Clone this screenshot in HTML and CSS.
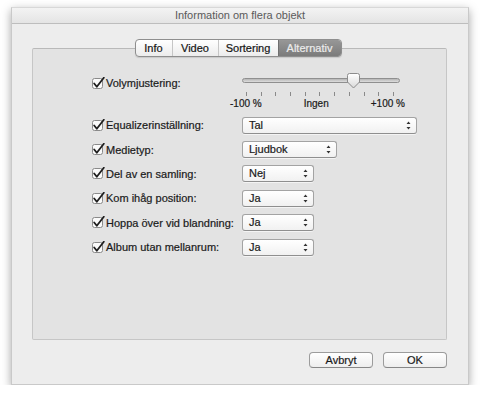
FILE: index.html
```html
<!DOCTYPE html>
<html lang="sv">
<head>
    <meta charset="UTF-8">
    <title>Information om flera objekt</title>
    <link rel="stylesheet" href="styles.css">
</head>
<body>
    <div class="window">
        <div class="titlebar">Information om flera objekt</div>
        <div class="window-body">
            <div class="tabs">
                <span class="tab info">Info</span>
                <span class="tab video">Video</span>
                <span class="tab sort">Sortering</span>
                <span class="tab selected">Alternativ</span>
            </div>
            <div class="panel">
                <div class="row volume-row">
                    <label class="check"><svg width="13" height="13" viewBox="0 0 13 13"><rect x="0.5" y="1.5" width="10" height="10" rx="2" fill="#fafafa" stroke="#8a8a8a"/><path d="M2.2 6.5 L4.8 9.8 L11.8 0.8" fill="none" stroke="#1d1d1d" stroke-width="1.8" stroke-linejoin="round" stroke-linecap="round"/></svg>Volymjustering:</label>
                    <div class="slider">
                        <div class="track"></div>
                        <div class="knob"><svg width="15" height="16" viewBox="0 0 15 16"><defs><linearGradient id="kg" x1="0" y1="0" x2="0" y2="1"><stop offset="0" stop-color="#ffffff"/><stop offset="1" stop-color="#d9d9d9"/></linearGradient></defs><path d="M1.5 2.5 Q1.5 0.5 3.5 0.5 L11.5 0.5 Q13.5 0.5 13.5 2.5 L13.5 9 L7.5 15 L1.5 9 Z" fill="url(#kg)" stroke="#8c8c8c"/></svg></div>
                        <div class="ticks">
                            <i></i><i></i><i></i><i></i><i></i><i></i><i></i><i></i><i></i><i></i><i></i>
                        </div>
                        <div class="tick-labels">
                            <span>-100 %</span>
                            <span>Ingen</span>
                            <span>+100 %</span>
                        </div>
                    </div>
                </div>
                <div class="row">
                    <label class="check"><svg width="13" height="13" viewBox="0 0 13 13"><rect x="0.5" y="1.5" width="10" height="10" rx="2" fill="#fafafa" stroke="#8a8a8a"/><path d="M2.2 6.5 L4.8 9.8 L11.8 0.8" fill="none" stroke="#1d1d1d" stroke-width="1.8" stroke-linejoin="round" stroke-linecap="round"/></svg>Equalizerinställning:</label>
                    <div class="popup wide">Tal<svg class="arrows" width="5" height="9" viewBox="0 0 5 9"><path d="M2.5 0.5 L4.5 3 L0.5 3 Z M2.5 8.5 L4.5 6 L0.5 6 Z" fill="#333"/></svg></div>
                </div>
                <div class="row">
                    <label class="check"><svg width="13" height="13" viewBox="0 0 13 13"><rect x="0.5" y="1.5" width="10" height="10" rx="2" fill="#fafafa" stroke="#8a8a8a"/><path d="M2.2 6.5 L4.8 9.8 L11.8 0.8" fill="none" stroke="#1d1d1d" stroke-width="1.8" stroke-linejoin="round" stroke-linecap="round"/></svg>Medietyp:</label>
                    <div class="popup medium">Ljudbok<svg class="arrows" width="5" height="9" viewBox="0 0 5 9"><path d="M2.5 0.5 L4.5 3 L0.5 3 Z M2.5 8.5 L4.5 6 L0.5 6 Z" fill="#333"/></svg></div>
                </div>
                <div class="row">
                    <label class="check"><svg width="13" height="13" viewBox="0 0 13 13"><rect x="0.5" y="1.5" width="10" height="10" rx="2" fill="#fafafa" stroke="#8a8a8a"/><path d="M2.2 6.5 L4.8 9.8 L11.8 0.8" fill="none" stroke="#1d1d1d" stroke-width="1.8" stroke-linejoin="round" stroke-linecap="round"/></svg>Del av en samling:</label>
                    <div class="popup">Nej<svg class="arrows" width="5" height="9" viewBox="0 0 5 9"><path d="M2.5 0.5 L4.5 3 L0.5 3 Z M2.5 8.5 L4.5 6 L0.5 6 Z" fill="#333"/></svg></div>
                </div>
                <div class="row">
                    <label class="check"><svg width="13" height="13" viewBox="0 0 13 13"><rect x="0.5" y="1.5" width="10" height="10" rx="2" fill="#fafafa" stroke="#8a8a8a"/><path d="M2.2 6.5 L4.8 9.8 L11.8 0.8" fill="none" stroke="#1d1d1d" stroke-width="1.8" stroke-linejoin="round" stroke-linecap="round"/></svg>Kom ihåg position:</label>
                    <div class="popup">Ja<svg class="arrows" width="5" height="9" viewBox="0 0 5 9"><path d="M2.5 0.5 L4.5 3 L0.5 3 Z M2.5 8.5 L4.5 6 L0.5 6 Z" fill="#333"/></svg></div>
                </div>
                <div class="row">
                    <label class="check"><svg width="13" height="13" viewBox="0 0 13 13"><rect x="0.5" y="1.5" width="10" height="10" rx="2" fill="#fafafa" stroke="#8a8a8a"/><path d="M2.2 6.5 L4.8 9.8 L11.8 0.8" fill="none" stroke="#1d1d1d" stroke-width="1.8" stroke-linejoin="round" stroke-linecap="round"/></svg>Hoppa över vid blandning:</label>
                    <div class="popup">Ja<svg class="arrows" width="5" height="9" viewBox="0 0 5 9"><path d="M2.5 0.5 L4.5 3 L0.5 3 Z M2.5 8.5 L4.5 6 L0.5 6 Z" fill="#333"/></svg></div>
                </div>
                <div class="row">
                    <label class="check"><svg width="13" height="13" viewBox="0 0 13 13"><rect x="0.5" y="1.5" width="10" height="10" rx="2" fill="#fafafa" stroke="#8a8a8a"/><path d="M2.2 6.5 L4.8 9.8 L11.8 0.8" fill="none" stroke="#1d1d1d" stroke-width="1.8" stroke-linejoin="round" stroke-linecap="round"/></svg>Album utan mellanrum:</label>
                    <div class="popup">Ja<svg class="arrows" width="5" height="9" viewBox="0 0 5 9"><path d="M2.5 0.5 L4.5 3 L0.5 3 Z M2.5 8.5 L4.5 6 L0.5 6 Z" fill="#333"/></svg></div>
                </div>
            </div>
            <div class="buttons">
                <button type="button">Avbryt</button>
                <button type="button">OK</button>
            </div>
        </div>
    </div>
</body>
</html>
```

FILE: styles.css
```css
* {
    margin: 0;
    padding: 0;
    box-sizing: border-box;
}

body {
    font-family: 'Liberation Sans', Arial, sans-serif;
    font-size: 11px;
    color: #1a1a1a;
    background: #fff;
    -webkit-text-stroke: 0.2px;
}

.window {
    width: 458px;
    height: 378px;
    margin: 7px 0 0 11px;
    background: #ededed;
    border: 1px solid #c9c9c9;
    border-top-color: #d8d8d8;
    box-shadow: 0 3px 9px rgba(0, 0, 0, 0.35);
    display: flex;
    flex-direction: column;
}

.titlebar {
    height: 16px;
    line-height: 15px;
    text-align: center;
    color: #5a5a5a;
    font-size: 11px;
    background: linear-gradient(#f3f3f3, #e4e4e4);
    border-bottom: 1px solid #bdbdbd;
    -webkit-text-stroke: 0;
}

.window-body {
    flex: 1;
    padding: 15px 21px 0 20px;
    display: flex;
    flex-direction: column;
}

.tabs {
    align-self: center;
    margin-left: -3px;
    display: flex;
    height: 18px;
    border: 1px solid #8e8e8e;
    border-radius: 4px;
    background: linear-gradient(#ffffff, #ececec);
    position: relative;
    z-index: 1;
    box-shadow: 0 1px 1px rgba(0, 0, 0, 0.12);
}

.tab {
    line-height: 17px;
    text-align: center;
    border-left: 1px solid #c6c6c6;
    color: #151515;
}

.tab.info {
    width: 36px;
    border-left: none;
}

.tab.video {
    width: 46px;
}

.tab.sort {
    width: 60px;
}

.tab.selected {
    width: 63px;
    background: linear-gradient(#979797, #7b7b7b);
    color: #ececec;
    border-left: 1px solid #6f6f6f;
    border-radius: 0 3px 3px 0;
}

.panel {
    margin-top: -9px;
    height: 292px;
    background: #e3e3e3;
    border: 1px solid #c6c6c6;
    border-top-color: #b9b9b9;
    border-radius: 2px;
    padding: 27px 0 0 59px;
}

.row {
    display: grid;
    grid-template-columns: 150px auto;
    align-items: center;
    height: 24.4px;
}

.volume-row {
    align-items: start;
    height: 37px;
}

.check {
    display: flex;
    align-items: center;
    line-height: 14px;
    white-space: nowrap;
}

.check svg {
    margin-right: 1px;
    flex: none;
}

.slider {
    position: relative;
    width: 158px;
}

.track {
    margin-top: 2px;
    height: 5px;
    border-radius: 3px;
    border: 1px solid #8f8f8f;
    background: linear-gradient(#b5b5b5, #dedede);
}

.knob {
    position: absolute;
    left: 104px;
    top: -3px;
    line-height: 0;
}

.ticks {
    display: flex;
    justify-content: space-between;
    padding: 0 6px 0 4px;
    margin-top: 9px;
}

.ticks i {
    width: 1px;
    height: 4px;
    background: #8a8a8a;
}

.tick-labels {
    display: flex;
    justify-content: space-between;
    margin: 1px -5px 0 -12px;
    line-height: 13px;
    font-size: 10px;
}

.popup {
    position: relative;
    width: 72px;
    height: 17px;
    line-height: 15px;
    padding-left: 6px;
    border: 1px solid #a3a3a3;
    border-bottom-color: #8f8f8f;
    border-radius: 3px;
    background: linear-gradient(#ffffff, #f1f1f1);
    box-shadow: 0 1px 0 rgba(255, 255, 255, 0.6);
}

.popup.wide {
    width: 175px;
}

.popup.medium {
    width: 95px;
}

.popup .arrows {
    position: absolute;
    right: 5px;
    top: 3px;
}

.buttons {
    display: flex;
    justify-content: flex-end;
    gap: 10px;
    margin-top: 12px;
}

.buttons button {
    width: 64px;
    height: 16px;
    font-family: 'Liberation Sans', Arial, sans-serif;
    font-size: 11px;
    color: #1a1a1a;
    border: 1px solid #9c9c9c;
    border-bottom-color: #878787;
    border-radius: 4px;
    background: linear-gradient(#ffffff, #eeeeee);
    -webkit-text-stroke: 0.2px;
}
```
